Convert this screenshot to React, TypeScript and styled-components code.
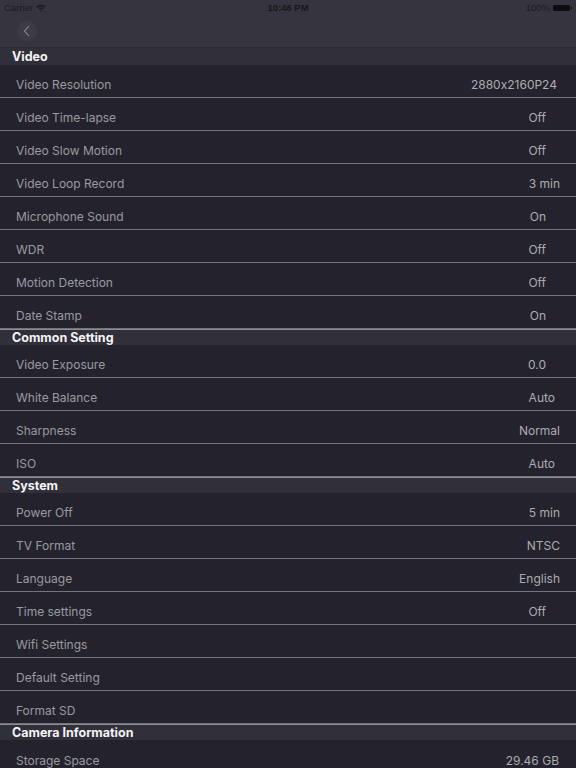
import React from "react";
import styled, { createGlobalStyle } from "styled-components";

const Global = createGlobalStyle`
  html, body { margin: 0; padding: 0; background: #24232d; }
  body { font-family: "Inter", "Liberation Sans", sans-serif; -webkit-font-smoothing: antialiased; font-feature-settings: "calt" 0; }
`;

const Page = styled.div`
  width: 576px;
  height: 768px;
  overflow: hidden;
  background: #24232d;
  display: flex;
  flex-direction: column;
`;

const StatusBar = styled.div`
  height: 15px;
  flex: none;
  box-sizing: border-box;
  background: #36353f;
  display: grid;
  grid-template-columns: 1fr auto 1fr;
  align-items: center;
  padding: 0 4px 0 4px;
  font-family: "Liberation Sans", sans-serif;
  font-size: 9.5px;
  color: #1a1a20;
`;

const StatusLeft = styled.div`
  display: flex;
  align-items: center;
  gap: 3px;
`;

const StatusCenter = styled.div`
  font-weight: 700;
  color: #17171c;
`;

const StatusRight = styled.div`
  display: flex;
  justify-content: flex-end;
  align-items: center;
  gap: 3px;
`;

const Battery = styled.div`
  width: 17px;
  height: 6px;
  margin-right: 2px;
  background: #0e0e12;
  border-radius: 1px;
  position: relative;
  &::after {
    content: "";
    position: absolute;
    right: -2px;
    top: 2px;
    width: 1px;
    height: 2px;
    background: #0e0e12;
  }
`;

const NavBar = styled.div`
  height: 33px;
  flex: none;
  box-sizing: border-box;
  background: #36353f;
  border-bottom: 1px solid #2b2a33;
  display: flex;
  align-items: center;
  padding-left: 17px;
`;

const BackButton = styled.div`
  width: 20px;
  height: 20px;
  border-radius: 50%;
  background: #3c3b46;
  display: flex;
  align-items: center;
  justify-content: center;
`;

const SectionHeader = styled.div<{ $first?: boolean }>`
  height: ${(p) => (p.$first ? "17px" : "16px")};
  flex: none;
  box-sizing: border-box;
  background: #302f3a;
  display: flex;
  align-items: center;
  padding-left: 12px;
  font-size: 12.5px;
  font-weight: 700;
  color: #f4f4f6;
  border-top: ${(p) => (p.$first ? "none" : "1px solid #8c8c92")};
`;

const Row = styled.div<{ $last?: boolean }>`
  height: 33px;
  flex: none;
  box-sizing: border-box;
  background: #24232d;
  display: flex;
  align-items: center;
  justify-content: space-between;
  padding: 7px 16px 0 16px;
  border-bottom: ${(p) => (p.$last ? "none" : "1px solid #74747a")};
  font-size: 12px;
`;

const Label = styled.span`
  color: #9a9aa0;
`;

const Value = styled.span<{ $inset: number }>`
  color: #acacb1;
  margin-right: ${(p) => p.$inset}px;
`;

type Item = [string, string, number?];
const sections: { title: string; items: Item[] }[] = [
  {
    title: "Video",
    items: [
      ["Video Resolution", "2880x2160P24", 3],
      ["Video Time-lapse", "Off", 14],
      ["Video Slow Motion", "Off", 14],
      ["Video Loop Record", "3 min", 0],
      ["Microphone Sound", "On", 14],
      ["WDR", "Off", 14],
      ["Motion Detection", "Off", 14],
      ["Date Stamp", "On", 14],
    ],
  },
  {
    title: "Common Setting",
    items: [
      ["Video Exposure", "0.0", 14],
      ["White Balance", "Auto", 5],
      ["Sharpness", "Normal", 0],
      ["ISO", "Auto", 5],
    ],
  },
  {
    title: "System",
    items: [
      ["Power Off", "5 min", 0],
      ["TV Format", "NTSC", 0],
      ["Language", "English", 0],
      ["Time settings", "Off", 14],
      ["Wifi Settings", ""],
      ["Default Setting", ""],
      ["Format SD", ""],
    ],
  },
  {
    title: "Camera Information",
    items: [["Storage Space", "29.46 GB", 1]],
  },
];

export default function App() {
  return (
    <Page>
      <Global />
      <StatusBar>
        <StatusLeft>
          <span>Carrier</span>
          <svg width="10" height="8" viewBox="0 0 9 7">
            <path d="M0.3 2.3 A6 6 0 0 1 8.7 2.3 L7.8 3.2 A4.7 4.7 0 0 0 1.2 3.2 Z" fill="#1a1a20" />
            <path d="M2 4 A3.6 3.6 0 0 1 7 4 L6.1 4.9 A2.3 2.3 0 0 0 2.9 4.9 Z" fill="#1a1a20" />
            <path d="M3.6 5.6 A1.3 1.3 0 0 1 5.4 5.6 L4.5 6.6 Z" fill="#1a1a20" />
          </svg>
        </StatusLeft>
        <StatusCenter>10:46 PM</StatusCenter>
        <StatusRight>
          <span>100%</span>
          <Battery />
        </StatusRight>
      </StatusBar>
      <NavBar>
        <BackButton>
          <svg width="8" height="12" viewBox="0 0 8 12">
            <path d="M6 1 L1.5 6 L6 11" stroke="#8d8c94" strokeWidth="1.1" fill="none" />
          </svg>
        </BackButton>
      </NavBar>
      {sections.map((s, si) => (
        <React.Fragment key={s.title}>
          <SectionHeader $first={si === 0}>{s.title}</SectionHeader>
          {s.items.map(([l, v, inset], i) => (
            <Row key={l} $last={si === sections.length - 1 && i === s.items.length - 1}>
              <Label>{l}</Label>
              <Value $inset={inset ?? 0}>{v}</Value>
            </Row>
          ))}
        </React.Fragment>
      ))}
    </Page>
  );
}
